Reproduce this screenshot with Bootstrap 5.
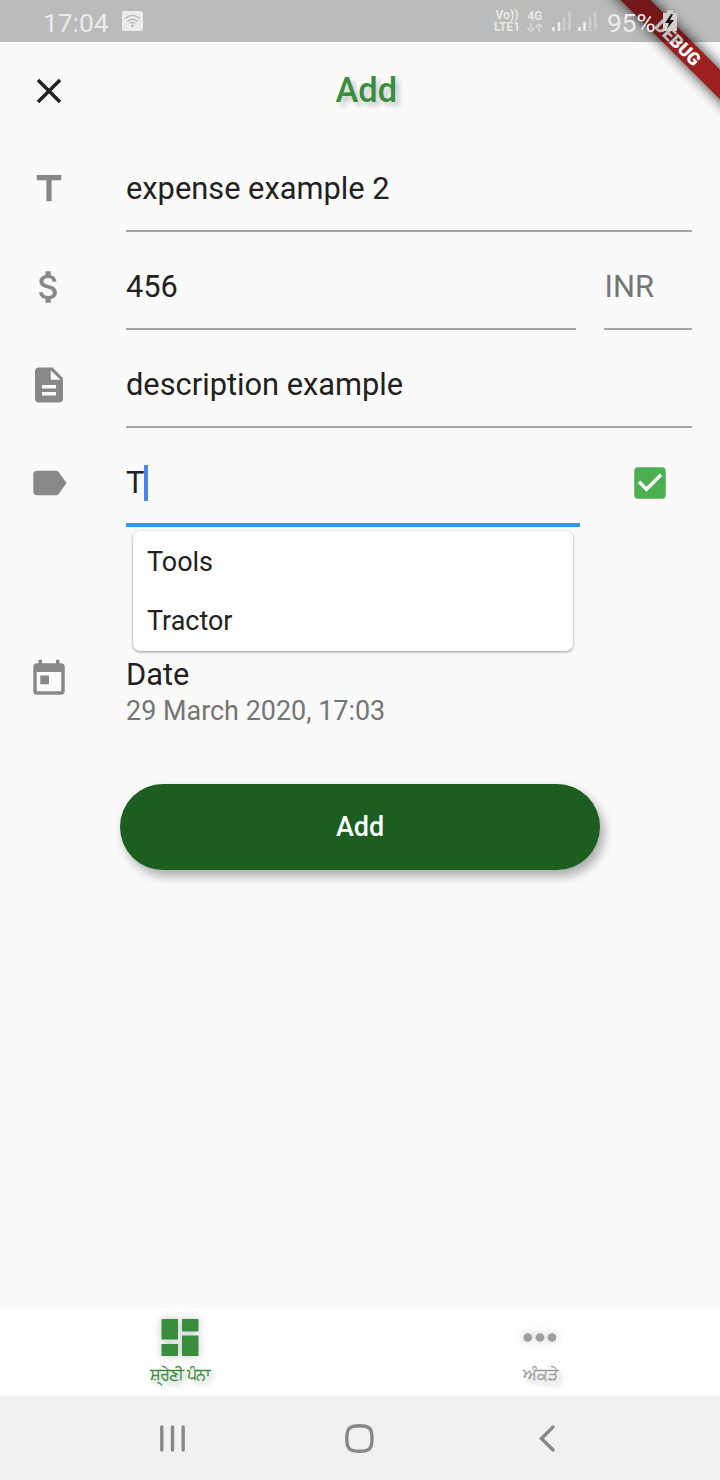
<!DOCTYPE html>
<html lang="en">
<head>
<meta charset="utf-8">
<meta name="viewport" content="width=device-width, initial-scale=1">
<title>Add expense</title>
<link href="https://cdn.jsdelivr.net/npm/bootstrap@5.3.0/dist/css/bootstrap.min.css" rel="stylesheet">
<style>
html,body{height:1480px;overflow:hidden}
body{width:720px;background:#fafafa;color:#212121;font-family:Roboto,"Noto Sans",sans-serif;font-size:30.8px;line-height:36px}
svg{display:block;flex:none}
.status{height:42px;background:rgba(0,0,0,.25);color:#ebebeb;z-index:3;padding-left:43px}
.clock{font-size:26.5px;width:79px;letter-spacing:-.1px;line-height:45px}
.tiny{font-size:12px;line-height:12px;font-weight:700;text-align:center;color:#e6e6e6}
.ribbon{right:-58px;top:22px;width:220px;height:21px;background:#9c1f20;transform:rotate(45deg);box-shadow:0 0 14px rgba(0,0,0,.85);color:#fff;font-size:17.8px;font-weight:900;line-height:21px;z-index:2;text-align:center;padding-left:28px}
.ribbon-clip{width:170px;height:170px;z-index:1}
.topbar{height:96px;margin-bottom:2px}
.topbar h1{font-size:34.4px;line-height:40px;font-weight:500;color:#388e3c;text-shadow:4px 4px 5px rgba(0,0,0,.2)}
.ic{width:42px;height:42px;fill:#888}
.entry{height:98px;padding:0 28px}
.entry .ic{margin:28px 56px 0 0}
.field{height:92px;padding-top:31px;border-bottom:2px solid #a5a5a5}
.field.focused{width:454px;height:93px;border-bottom:4px solid #3a97e4}
.caret{width:4px;height:36px;background:#4a86e8}
.currency{width:88px;color:#757575;text-indent:.6px}
.options{left:133px;top:531px;width:440px;height:120px;border-radius:7px;background:#fff;box-shadow:0 1px 3px rgba(0,0,0,.4);font-size:26.95px;z-index:2}
.options div{height:59px;line-height:62px;padding-left:14px}
.sub-date{font-size:26.95px;color:#757575;line-height:36px}
.add-btn,.add-btn:hover{width:480px;height:86px;border-radius:43px;background:#1b5e20;color:#fff;font-size:26.95px;font-weight:500;box-shadow:4px 6px 11px rgba(0,0,0,.33);border:0}
.tabs{height:88px;background:#fff;font-size:16.3px;line-height:24px}
.tab-item{color:#388e3c;text-shadow:4px 5px 5px rgba(0,0,0,.25)}
.tab-item span{-webkit-text-stroke:.3px currentColor}
.tab-item.idle{color:#9e9e9e}
.tab-item svg{filter:drop-shadow(0 0 4px rgba(0,0,0,.22))}
.sysnav{height:84px;background:#f1f1f1}
</style>
</head>
<body class="d-flex flex-column position-relative">
<div class="ribbon-clip position-absolute top-0 end-0 overflow-hidden"><div class="ribbon position-absolute">DEBUG</div></div>

<header class="status d-flex position-relative flex-shrink-0">
  <span class="clock">17:04</span>
  <svg width="22" height="42" viewBox="0 0 22 42"><rect y="11" width="21" height="20" rx="2" fill="#ebebeb"/><g fill="none" stroke="#bbb" stroke-width="1.5"><path d="M3 18.500q7.500-6 15 0M5.500 21.200q5-3.700 10 0M7.700 23.500q2.800-2 5.600 0"/></g><circle cx="10.500" cy="25.800" r="1.400" fill="#bbb"/></svg>
  <div class="tiny" style="margin:9px 0 0 349px;width:28px">Vo))<br>LTE1</div>
  <div class="tiny" style="margin:10px 0 0 5px;width:18px">4G
    <svg width="18" height="12" viewBox="0 0 18 12" fill="none" stroke="#d3d3d3" stroke-width="1.800"><path d="M5 1v8M1.500 6L5 9.500 8.500 6M13 10V2M9.500 5.500L13 2l3.500 3.500"/></svg></div>
  <svg class="ms-2" width="47" height="42" viewBox="0 0 47 42" stroke-width="2.500"><path d="M1.500 27v4M7 22v9M27.500 27v4M32.500 22v9" stroke="#eee"/><path d="M12 17v14M17.500 11v20M38 17v14M43.300 11v20" stroke="#cdcdcd"/></svg>
  <span style="margin-left:8px;font-size:26.5px;line-height:45px;width:56px;letter-spacing:-.3px;white-space:nowrap">95%</span>
  <svg width="14" height="42" viewBox="0 0 14 42"><path d="M4 10h6v3h4v18H0V13h4z" fill="#d4cfcf"/><path d="M8 14L2 23h4l-2 6 7-9H7l3-6z" fill="#1d1212"/></svg>
</header>

<div class="topbar d-flex align-items-center position-relative flex-shrink-0">
  <svg style="margin:2px 0 0 28px" width="42" height="42" viewBox="0 0 24 24"><path d="M19 6.410L17.590 5 12 10.590 6.410 5 5 6.410 10.590 12 5 17.590 6.410 19 12 13.410 17.590 19 19 17.590 13.410 12z" fill="#212121"/></svg>
  <h1 class="mb-0" style="margin-left:265.500px">Add</h1>
</div>

<main class="flex-grow-1">
  <div class="entry d-flex">
    <svg class="ic" viewBox="0 0 24 24"><path d="M5 4v3h5.500v12h3V7H19V4z"/></svg>
    <div class="field flex-grow-1">expense example 2</div>
  </div>
  <div class="entry d-flex">
    <svg class="ic" viewBox="0 0 24 24"><path d="M11.800 10.900c-2.270-.59-3-1.200-3-2.150 0-1.090 1.010-1.850 2.700-1.850 1.780 0 2.440.85 2.500 2.100h2.210c-.07-1.720-1.120-3.300-3.210-3.810V3h-3v2.160c-1.940.42-3.500 1.680-3.500 3.610 0 2.310 1.910 3.460 4.700 4.130 2.500.6 3 1.480 3 2.410 0 .69-.49 1.790-2.700 1.790-2.060 0-2.870-.92-2.980-2.100h-2.200c.12 2.190 1.760 3.420 3.680 3.830V21h3v-2.150c1.950-.37 3.500-1.500 3.500-3.550 0-2.840-2.430-3.810-4.700-4.400z"/></svg>
    <div class="field flex-grow-1">456</div>
    <div class="field currency" style="margin-left:28px">INR</div>
  </div>
  <div class="entry d-flex">
    <svg class="ic" viewBox="0 0 24 24"><path d="M14 2H6c-1.100 0-1.990.9-1.990 2L4 20c0 1.100.89 2 1.990 2H18c1.100 0 2-.9 2-2V8l-6-6zm2 16H8v-2h8v2zm0-4H8v-2h8v2zm-3-5V3.500L18.500 9H13z"/></svg>
    <div class="field flex-grow-1">description example</div>
  </div>
  <div class="entry d-flex">
    <svg class="ic" viewBox="0 0 24 24"><path d="M17.630 5.840C17.270 5.330 16.670 5 16 5L5 5.010C3.900 5.010 3 5.900 3 7v10c0 1.100.9 1.990 2 1.990L16 19c.67 0 1.270-.33 1.630-.84L22 12l-4.370-6.160z"/></svg>
    <div class="field focused d-flex"><span style="width:17.500px">T</span><span class="caret"></span></div>
    <svg style="margin:28px 0 0 49px" width="42" height="42" viewBox="0 0 24 24"><path fill="#4caf50" d="M19 3H5c-1.110 0-2 .9-2 2v14c0 1.100.89 2 2 2h14c1.110 0 2-.9 2-2V5c0-1.100-.89-2-2-2zm-9 14l-5-5 1.410-1.410L10 14.170l7.590-7.590L19 8l-9 9z"/></svg>
  </div>
  <div class="entry d-flex" style="margin-top:96px;height:156px">
    <svg class="ic" style="margin-top:30px" viewBox="0 0 24 24"><path d="M19 3h-1V1h-2v2H8V1H6v2H5c-1.110 0-1.990.9-1.990 2L3 19c0 1.100.89 2 2 2h14c1.100 0 2-.9 2-2V5c0-1.100-.9-2-2-2zm0 16H5V8h14v11zM7 10h5v5H7z"/></svg>
    <div style="padding-top:29px">Date<div class="sub-date">29 March 2020, 17:03</div></div>
  </div>
  <button type="button" class="btn add-btn d-block mx-auto">Add</button>
</main>
<div class="options position-absolute"><div>Tools</div><div>Tractor</div></div>

<nav class="tabs d-flex flex-shrink-0">
  <div class="tab-item w-50 d-flex flex-column align-items-center">
    <svg style="margin-top:11px" width="38" height="38" viewBox="0 0 38 38" fill="#388e3c"><path d="M.5 0H17v20.500H.5zM21 0h16.500v12.500H21zM.5 25H17v12H.5zM21 16.500h16.500V37H21z"/></svg>
    <span style="margin-top:6px;letter-spacing:-1px">&#xA36;&#xA4D;&#xA30;&#xA47;&#xA23;&#xA40; ਪੰਨਾ</span>
  </div>
  <div class="tab-item idle w-50 d-flex flex-column align-items-center">
    <svg style="margin-top:11px" width="38" height="38" viewBox="0 0 38 38" fill="#9e9e9e"><circle cx="6.800" cy="18.500" r="4.300"/><circle cx="19" cy="18.500" r="4.300"/><circle cx="31" cy="18.500" r="4.300"/></svg>
    <span style="margin-top:6px">ਅੰਕੜੇ</span>
  </div>
</nav>
<footer class="sysnav flex-shrink-0 d-flex align-items-center">
  <svg width="720" height="84" viewBox="0 0 720 84" fill="none" stroke="#888" stroke-width="3.400" stroke-linecap="round"><path d="M161.800 31v23M172.500 31v23M183.200 31v23"/><path d="M359.500 29.700c10 0 12.500 2.500 12.500 12.800s-2.500 12.800-12.500 12.800-12.700-2.500-12.700-12.800 2.700-12.800 12.700-12.800z"/><path d="M553 31L541.500 42.500 553 54"/></svg>
</footer>
<script src="https://cdn.jsdelivr.net/npm/bootstrap@5.3.0/dist/js/bootstrap.bundle.min.js"></script>
</body>
</html>
